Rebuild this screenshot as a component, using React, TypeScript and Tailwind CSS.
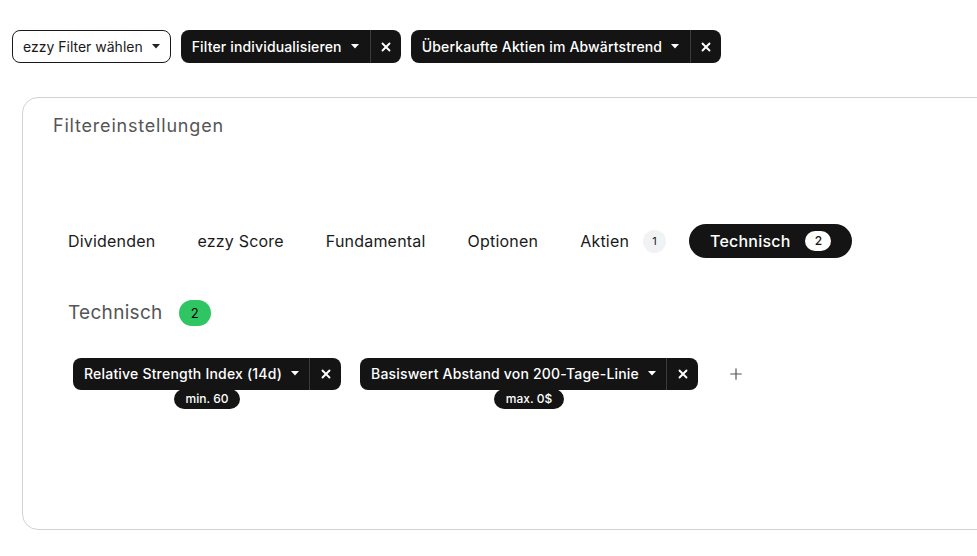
import { X, Plus } from "lucide-react";

const font = { fontFamily: "Inter, 'Noto Sans', sans-serif" };

// kleiner Pfeil nach unten
const Caret = ({ light }: { light?: boolean }) => (
  <svg width="8" height="5" viewBox="0 0 8 5" className="ml-[9px]">
    <path d="M0 0h8L4 4.5z" fill={light ? "#ffffff" : "#222222"} />
  </svg>
);

const DarkChip = ({ label }: { label: string }) => (
  <div className="flex h-[33px] items-center rounded-[8px] bg-[#141414] text-[14px] font-medium tracking-[0.15px] text-white">
    <div className="flex h-full items-center pl-[11px] pr-[11px]">
      {label}
      <Caret light />
    </div>
    <div className="flex h-full w-[31px] items-center justify-center border-l border-[#3a3a3a]">
      <X size={14} strokeWidth={3.2} />
    </div>
  </div>
);

const FilterChip = ({ label, sub }: { label: string; sub: string }) => (
  <div className="flex flex-col items-center">
    <div className="flex h-[32px] items-center rounded-[8px] bg-[#141414] text-[14px] font-medium tracking-[0.2px] text-white">
      <div className="flex h-full items-center pl-[11px] pr-[10px]">
        {label}
        <Caret light />
      </div>
      <div className="flex h-full w-[32px] items-center justify-center border-l border-[#3a3a3a]">
        <X size={14} strokeWidth={3.2} />
      </div>
    </div>
    <div className="-mt-px flex h-[20px] items-center rounded-full bg-[#141414] px-[12px] text-[12px] font-medium text-white">
      {sub}
    </div>
  </div>
);

const tabs = [
  { name: "Dividenden" },
  { name: "ezzy Score" },
  { name: "Fundamental" },
  { name: "Optionen" },
  { name: "Aktien", count: 1 },
  { name: "Technisch", count: 2, active: true },
];

export default function App() {
  return (
    <div className="min-h-[556px] w-full overflow-hidden bg-white" style={font}>
      {/* Obere Filterleiste */}
      <div className="flex items-center gap-[10px] pl-[12px] pt-[30px]">
        <div className="flex h-[33px] items-center rounded-[8px] border border-[#1a1a1a] px-[10px] text-[14px] text-[#1a1a1a]">
          ezzy Filter wählen
          <Caret />
        </div>
        <DarkChip label="Filter individualisieren" />
        <DarkChip label="Überkaufte Aktien im Abwärtstrend" />
      </div>

      {/* Filtereinstellungen Karte */}
      <div className="ml-[22px] mt-[34px] h-[433px] w-[1000px] rounded-[16px] border border-[#d2d2d2] pl-[30px] pt-[14px]">
        <h2 className="text-[18px] tracking-[0.8px] text-[#555555]">Filtereinstellungen</h2>

        <div className="-ml-[6px] mt-[85px] flex items-center text-[16px] tracking-[0.2px]">
          {tabs.map((t) =>
            t.active ? (
              <div
                key={t.name}
                className="ml-[2px] flex h-[34px] items-center rounded-full bg-[#141414] px-[21px] font-medium text-white"
              >
                {t.name}
                <span className="ml-[15px] flex h-[20px] w-[26px] items-center justify-center rounded-full bg-white text-[12px] text-[#141414]">
                  {t.count}
                </span>
              </div>
            ) : (
              <div key={t.name} className="flex h-[34px] items-center px-[21px] text-[#1a1a1a]">
                {t.name}
                {t.count && (
                  <span className="ml-[14px] flex h-[23px] w-[23px] items-center justify-center rounded-full bg-[#f1f2f3] text-[11px] text-[#1a1a1a]">
                    {t.count}
                  </span>
                )}
              </div>
            )
          )}
        </div>

        <div className="ml-[15px] mt-[41px] flex items-center">
          <span className="text-[19px] tracking-[0.3px] text-[#555555]">Technisch</span>
          <span className="ml-[16px] flex h-[26px] w-[32px] items-center justify-center rounded-full bg-[#2fc563] text-[13px] text-black">
            2
          </span>
        </div>

        <div className="ml-[20px] mt-[30px] flex items-start">
          <FilterChip label="Relative Strength Index (14d)" sub="min. 60" />
          <div className="ml-[19px]">
            <FilterChip label="Basiswert Abstand von 200-Tage-Linie" sub="max. 0$" />
          </div>
          <div className="ml-[29px] flex h-[32px] items-center text-[#555555]">
            <Plus size={18} strokeWidth={1.6} />
          </div>
        </div>
      </div>
    </div>
  );
}
